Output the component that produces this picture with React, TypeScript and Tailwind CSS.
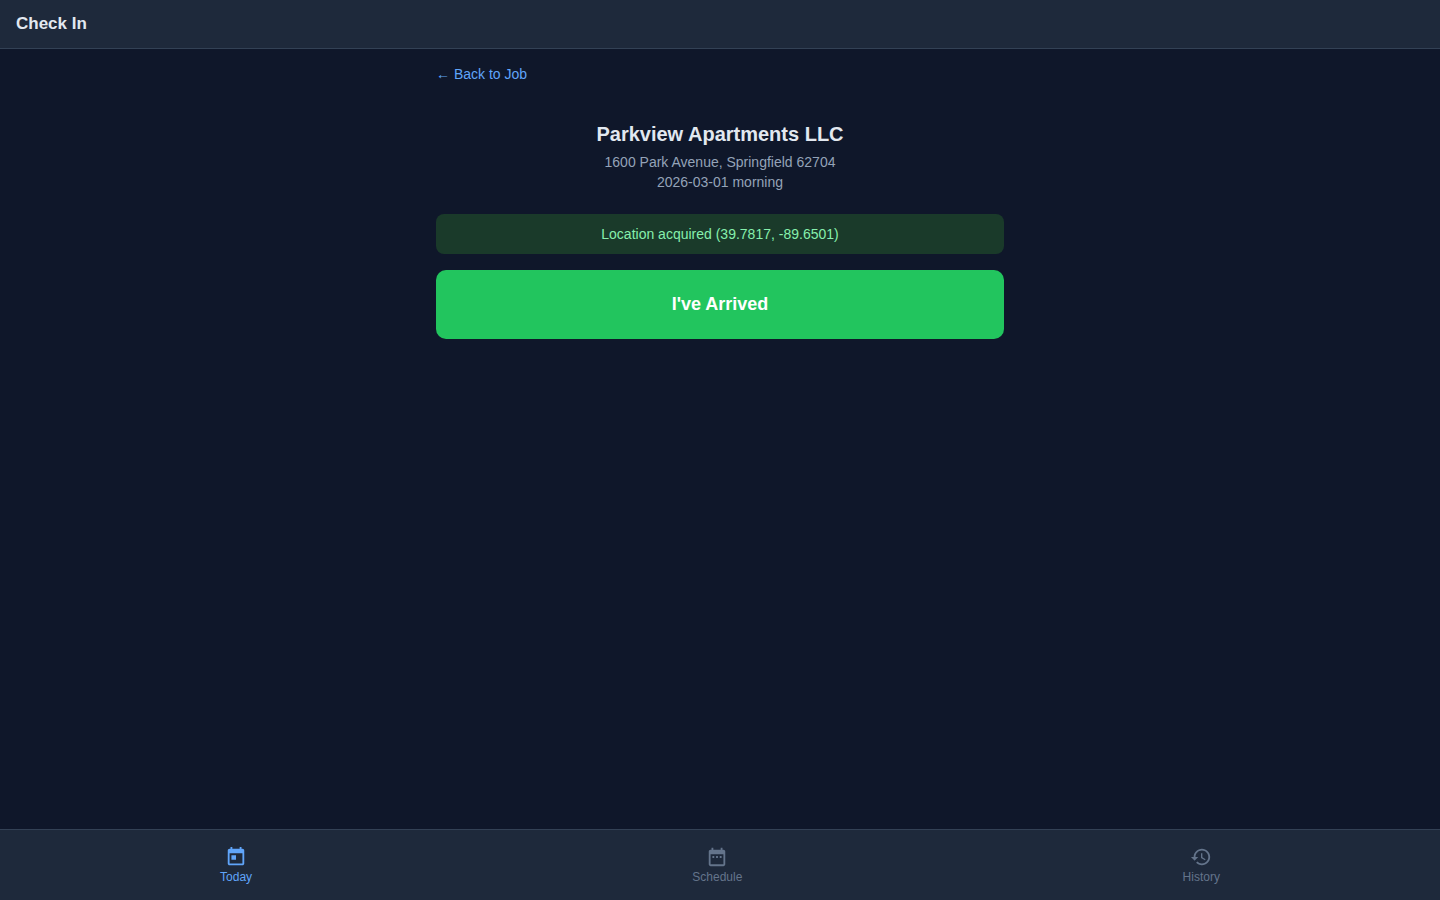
import type { ReactNode } from "react";

const HistoryIcon = () => (
  <path d="M13 3c-4.97 0-9 4.03-9 9H1l3.89 3.89.07.14L9 12H6c0-3.87 3.13-7 7-7s7 3.13 7 7-3.13 7-7 7c-1.93 0-3.68-.79-4.94-2.06l-1.42 1.42C8.27 19.99 10.51 21 13 21c4.97 0 9-4.03 9-9s-4.03-9-9-9zm-1 5v5l4.28 2.54.72-1.21-3.5-2.08V8H12z" />
);

const TodayIcon = () => (
  <path d="M19 3h-1V1h-2v2H8V1H6v2H5c-1.11 0-1.99.9-1.99 2L3 19c0 1.1.89 2 2 2h14c1.1 0 2-.9 2-2V5c0-1.1-.9-2-2-2zm0 16H5V8h14v11zM7 10h5v5H7z" />
);

const ScheduleIcon = () => (
  <path d="M9 11H7v2h2v-2zm4 0h-2v2h2v-2zm4 0h-2v2h2v-2zm2-7h-1V2h-2v2H8V2H6v2H5c-1.11 0-1.99.9-1.99 2L3 20c0 1.1.89 2 2 2h14c1.1 0 2-.9 2-2V6c0-1.1-.9-2-2-2zm0 16H5V9h14v11z" />
);

type NavItemProps = {
  href: string;
  label: string;
  active?: boolean;
  children: ReactNode;
};

const NavItem = ({ href, label, active, children }: NavItemProps) => (
  <a
    href={href}
    aria-current={active ? "page" : undefined}
    className={`flex flex-col items-center gap-0.5 px-3 py-2 text-xs ${active ? "text-[#60a5fa]" : "text-[#64748b]"}`}
  >
    <svg viewBox="0 0 24 24" fill="currentColor" aria-hidden="true" className="w-[22px] h-[22px]">
      {children}
    </svg>
    <span className="leading-[14px]">{label}</span>
  </a>
);

const App = () => {
  return (
    <div className="min-h-screen flex flex-col bg-[#0f172a] text-[#e2e8f0] font-['Liberation_Sans',Arial,sans-serif]">
      <header className="bg-[#1e293b] border-b border-[#334155] px-4 py-3">
        <h1 className="text-[17px] leading-6 font-bold">Check In</h1>
      </header>

      <main className="flex-1 w-full max-w-[600px] mx-auto p-4">
        <a href="#job" className="block w-fit text-sm leading-[18px] text-[#60a5fa]">← Back to Job</a>

        {/* Job details */}
        <div className="pt-[37px] pb-[22px] text-center">
          <h2 className="text-xl font-bold mb-1">Parkview Apartments LLC</h2>
          <p className="text-sm text-[#94a3b8]">1600 Park Avenue, Springfield 62704</p>
          <p className="text-sm text-[#94a3b8]">2026-03-01 morning</p>
        </div>

        <div role="status" className="mb-4 rounded-lg bg-[#1a3a2a] px-3 py-2.5 text-center text-sm text-[#86efac]">
          Location acquired (39.7817, -89.6501)
        </div>

        <button type="button" className="w-full rounded-[10px] bg-[#22c55e] py-5 text-lg leading-[29px] font-bold text-white">
          I've Arrived
        </button>
      </main>

      <nav className="sticky bottom-0 flex justify-around bg-[#1e293b] border-t border-[#334155] py-2">
        <NavItem href="#today" label="Today" active>
          <TodayIcon />
        </NavItem>
        <NavItem href="#schedule" label="Schedule">
          <ScheduleIcon />
        </NavItem>
        <NavItem href="#history" label="History">
          <HistoryIcon />
        </NavItem>
      </nav>
    </div>
  );
};

export default App;
